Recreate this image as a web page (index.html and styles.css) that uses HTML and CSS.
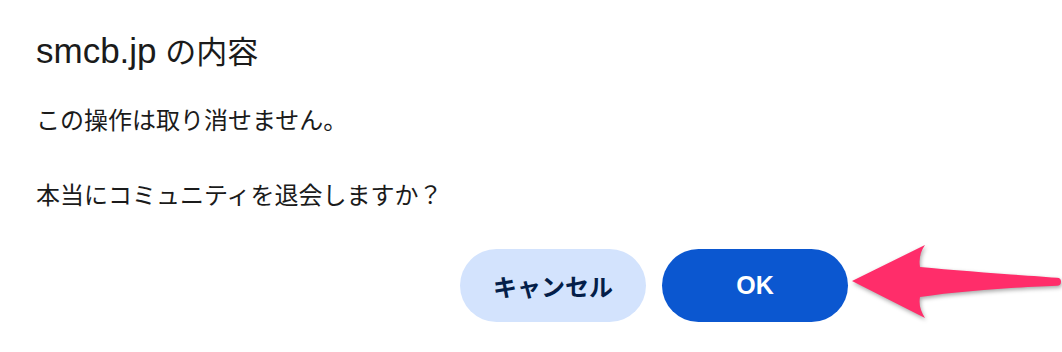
FILE: index.html
```html
<!DOCTYPE html>
<html lang="ja">
<head>
<meta charset="utf-8">
<title>smcb.jp の内容</title>
<link rel="stylesheet" href="styles.css">
</head>
<body>
<div class="dialog">
  <h1 class="title"><span class="host">smcb.jp</span> の内容</h1>
  <p class="message">この操作は取り消せません。<br><br>本当にコミュニティを退会しますか？</p>
  <div class="actions">
    <button class="btn btn-cancel">キャンセル</button>
    <button class="btn btn-ok">OK</button>
  </div>
</div>
<svg class="pointer" width="222" height="95" viewBox="0 0 222 95" aria-hidden="true">
  <path d="M12,46 L85,10 Q78,20 80,32 C120,36 180,40 217,42.7 A4,4 0 0 1 217,50.7 C180,52 120,56 80,62 Q78,72 85,83 Z" fill="#ff2d6a"/>
</svg>
</body>
</html>
```

FILE: styles.css
```css
html, body {
  margin: 0;
  padding: 0;
  background: #ffffff;
}

body {
  width: 1062px;
  height: 352px;
  position: relative;
  overflow: hidden;
  font-family: "Liberation Sans", "Noto Sans CJK JP", sans-serif;
  color: #1b1b1b;
}

.dialog {
  width: 848px;
  padding: 31px 0 0 36px;
  box-sizing: border-box;
}

.title {
  margin: 0;
  font-size: 31px;
  line-height: 40px;
  font-weight: normal;
  color: #1b1b1b;
}

.host {
  font-size: 35px;
  line-height: 40px;
}

.message {
  margin: 29px 0 0 0;
  font-size: 24px;
  line-height: 37.5px;
  color: #1b1b1b;
}

.actions {
  display: flex;
  justify-content: flex-end;
  gap: 16px;
  margin-top: 34.5px;
}

.btn {
  width: 186px;
  height: 73px;
  border: none;
  border-radius: 36.5px;
  font-family: "Liberation Sans", "Noto Sans CJK JP", sans-serif;
  font-weight: bold;
  display: flex;
  align-items: center;
  justify-content: center;
  padding: 0;
}

.btn-cancel {
  background: #d3e3fd;
  color: #041e49;
  font-size: 24px;
}

.btn-ok {
  background: #0b57d0;
  color: #ffffff;
  font-size: 25px;
}

.pointer {
  position: absolute;
  left: 840px;
  top: 235px;
  filter: drop-shadow(1px 2px 2px rgba(0, 0, 0, 0.35));
}
```
